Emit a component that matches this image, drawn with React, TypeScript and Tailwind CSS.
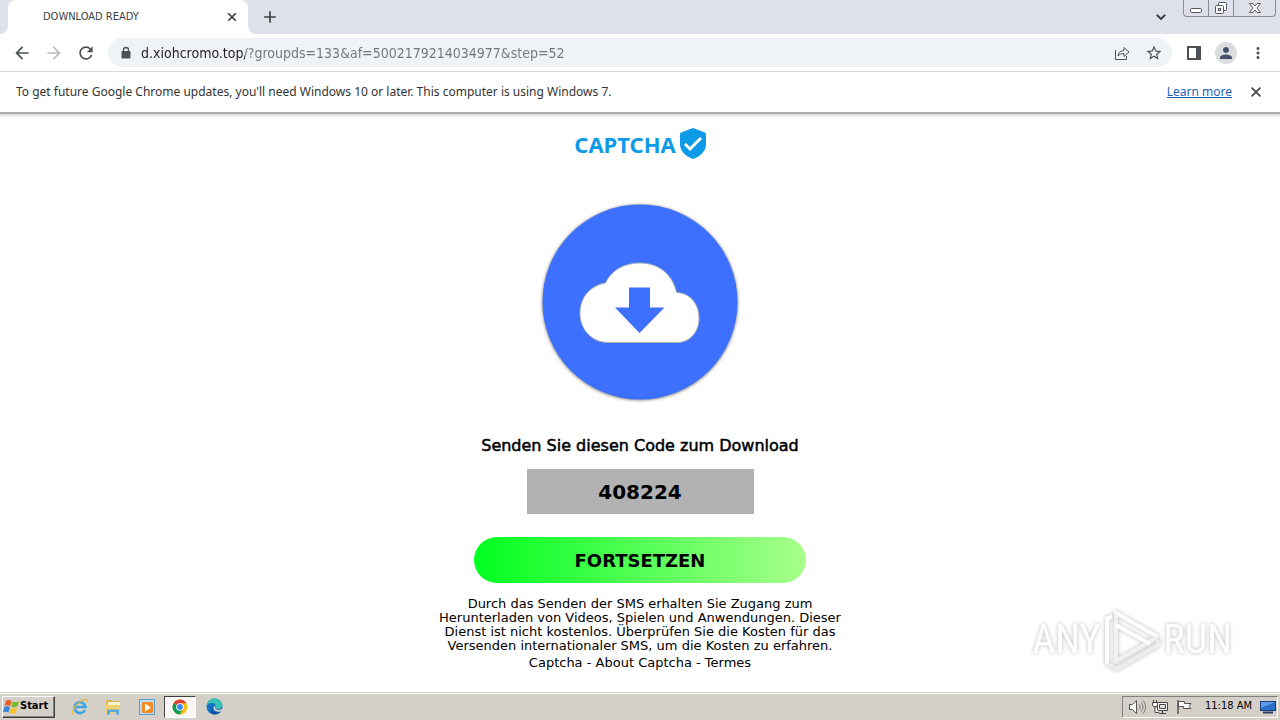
import type { ReactNode } from 'react';
import {
  MdAdd,
  MdArrowBack,
  MdArrowForward,
  MdClose,
  MdKeyboardArrowDown,
  MdMoreVert,
  MdPerson,
  MdRefresh,
  MdStarBorder,
} from 'react-icons/md';

// thickens the drawn path of a Material icon, the first path is its empty bounding box
const bold = '[&_path:last-child]:[stroke-width:1]';

function IconButton({ label, className = '', children }: { label: string; className?: string; children: ReactNode }) {
  return (
    <button type="button" aria-label={label} className={`flex shrink-0 items-center justify-center ${className}`}>
      {children}
    </button>
  );
}

function TabStrip() {
  return (
    <div className="flex h-[34px] bg-[#dee1e9]">
      <div className="w-2 bg-white">
        <div className="h-full rounded-br-lg bg-[#dee1e9]" />
      </div>
      <div className="flex w-60 items-center justify-between rounded-t-lg bg-white pr-2 pl-[35px] text-[#3c4043]">
        <span className="text-[11px]">DOWNLOAD READY</span>
        <IconButton label="Close tab" className="h-4 w-4">
          <MdClose size={14} className={bold} />
        </IconButton>
      </div>
      <div className="flex-1 bg-white">
        <div className="flex h-full items-center rounded-bl-lg bg-[#dee1e9] pl-3 text-[#3c4043]">
          <IconButton label="New tab" className="h-5 w-5">
            <MdAdd size={20} />
          </IconButton>
          <IconButton label="Search tabs" className="mr-3 ml-auto h-5 w-5">
            <MdKeyboardArrowDown size={18} className={bold} />
          </IconButton>
          <div className="mr-1 flex h-[17px] self-start rounded-b border border-t-0 border-[#8a8d94] text-[#55585f]">
            <IconButton label="Minimize" className="w-[25px] border-r border-[#8a8d94]">
              <svg width="14" height="14" viewBox="0 0 14 14" fill="#fff" stroke="currentColor">
                <rect x="1.5" y="7.5" width="11" height="4" rx="1" />
              </svg>
            </IconButton>
            <IconButton label="Restore" className="w-[25px] border-r border-[#8a8d94]">
              <svg width="14" height="14" viewBox="0 0 14 14" fill="#fff" stroke="currentColor">
                <rect x="4.5" y="1.5" width="8" height="8" rx="1" />
                <rect x="1.5" y="4.5" width="8" height="8" rx="1" />
                <rect x="4.5" y="7.5" width="2" height="2" />
              </svg>
            </IconButton>
            <IconButton label="Close" className="w-[41px]">
              <svg width="14" height="14" viewBox="0 0 14 14" fill="#fff" stroke="currentColor">
                <path d="M1.5 2.5H5L7 5l2-2.5h3.5L9 7l3.500 4.500H9L7 9l-2 2.500H1.500L5 7z" />
              </svg>
            </IconButton>
          </div>
        </div>
      </div>
    </div>
  );
}

function Toolbar() {
  return (
    <div className="flex h-[38px] items-center border-b border-[#d5d7da] bg-white px-3 text-[#4d5156]">
      <IconButton label="Back" className="mr-3 h-5 w-5">
        <MdArrowBack size={20} />
      </IconButton>
      <IconButton label="Forward" className="mr-3 h-5 w-5 text-[#babcbe]">
        <MdArrowForward size={20} />
      </IconButton>
      <IconButton label="Reload" className="mr-3 h-5 w-5">
        <MdRefresh size={20} />
      </IconButton>
      <div className="flex h-[29px] flex-1 items-center rounded-full bg-[#f0f3f5] pr-2 pl-[11px]">
        <svg width="14" height="14" viewBox="0 0 14 14" className="mr-2 shrink-0" aria-hidden="true">
          <rect x="2.500" y="5" width="9" height="7.500" rx="1" fill="currentColor" />
          <path d="M4.500 5.500V4a2.500 2.500 0 0 1 5 0v1.500" fill="none" stroke="currentColor" strokeWidth="1.300" />
        </svg>
        <input
          type="text"
          aria-label="Address"
          defaultValue="d.xiohcromo.top/?groupds=133&af=5002179214034977&step=52"
          className="w-full flex-1 bg-[linear-gradient(90deg,#202124_104px,#70757a_104px)] bg-clip-text text-sm text-transparent outline-none"
        />
        <IconButton label="Share" className="mr-3 h-5 w-5">
          <svg width="16" height="16" viewBox="0 0 16 16" fill="none" stroke="currentColor">
            <path d="M1.500 5v9.500h11V11" />
            <path d="M4 11c.5-3.500 2.500-5.500 6-5.500V2.500L15 7l-5 4.500V8.500c-2.500 0-4.500.8-6 2.500z" strokeLinejoin="round" />
          </svg>
        </IconButton>
        <IconButton label="Bookmark this page" className="h-5 w-5">
          <MdStarBorder size={18} />
        </IconButton>
      </div>
      <IconButton label="Side panel" className="ml-3 h-5 w-5">
        <svg width="14" height="14" viewBox="0 0 14 14" fill="currentColor">
          <path d="M0 0h14v14H0zM2 2v10h7V2z" fillRule="evenodd" />
        </svg>
      </IconButton>
      <IconButton label="Profile" className="mx-[11px] h-[22px] w-[22px] rounded-full bg-[#dadce0] text-[#46506b]">
        <MdPerson size={18} />
      </IconButton>
      <IconButton label="Menu" className="h-5 w-5">
        <MdMoreVert size={18} />
      </IconButton>
    </div>
  );
}

function InfoBar() {
  return (
    <div className="flex h-10 items-center bg-white px-4 font-['Noto_Sans',sans-serif] text-xs text-[#333]">
      <p className="flex-1">
        To get future Google Chrome updates, you'll need Windows 10 or later. This computer is using Windows 7.
      </p>
      <a href="#" className="mr-4 text-[#1a62b8] underline">
        Learn more
      </a>
      <IconButton label="Dismiss" className="h-4 w-4 text-[#4d5156]">
        <MdClose size={16} className={bold} />
      </IconButton>
    </div>
  );
}

function DownloadBadge() {
  return (
    <svg width="208" height="208" viewBox="0 0 208 208" role="img" aria-label="Download">
      <defs>
        <filter id="soft" x="-10%" y="-10%" width="120%" height="120%">
          <feGaussianBlur stdDeviation="1.6" />
        </filter>
      </defs>
      <circle cx="104" cy="104.500" r="98" fill="#8c8c84" filter="url(#soft)" />
      <circle cx="104" cy="104" r="97.500" fill="#3d70ff" />
      <path
        d="M72 144.500c-16 0-28-13-28-29 0-17 11-28 25.500-30.500C75 73 87 65 104 65c19 0 33 12 36.500 29.500C154 95 163 106 163 120c0 14-9 24.500-22 24.500z"
        fill="#fff"
        stroke="#a9b3b0"
        strokeWidth="1"
      />
      <path d="M93 89.500h21v20h14.500L103.500 135 79 109.500h14z" fill="#3d70ff" />
    </svg>
  );
}

function Captcha() {
  return (
    <main className="flex flex-1 flex-col items-center border-t-2 border-[#adadad] bg-[linear-gradient(#d8d8d8,#fff_4px)] px-4 pt-[14px] font-['DejaVu_Sans',sans-serif] text-black">
      <div className="flex h-8 items-center gap-1 font-['Noto_Sans',sans-serif] text-[22px] font-bold text-[#0d9ae6]">
        <span>CAPTCHA</span>
        <svg width="26" height="32" viewBox="0 0 26 32" aria-hidden="true">
          <path d="M13 0 25 4.500Q26 5 26 6v10c0 7-5 12-13 15C5 28 0 23 0 16V6Q0 5 1 4.500z" fill="#0d9ae6" />
          <path d="m5 16 5 5L21 10" fill="none" stroke="#fff" strokeWidth="3" />
        </svg>
      </div>
      <div className="mt-[38px]">
        <DownloadBadge />
      </div>
      <h1 className="mt-[30px] text-base leading-5 [-webkit-text-stroke:0.5px_#000]">
        Senden Sie diesen Code zum Download
      </h1>
      <div className="mt-[13px] flex h-[45px] w-[227px] items-center justify-center bg-[#b2b2b2] pt-px text-xl font-bold">
        408224
      </div>
      <button
        type="button"
        className="mt-[23px] h-[46px] w-[332px] rounded-full bg-[linear-gradient(90deg,#00ff20,#a8ff8c)] pt-px text-lg font-bold"
      >
        FORTSETZEN
      </button>
      <p className="mt-[14px] w-[410px] text-center text-[13px] leading-[14px]">
        Durch das Senden der SMS erhalten Sie Zugang zum Herunterladen von Videos, Spielen und Anwendungen. Dieser
        Dienst ist nicht kostenlos. Überprüfen Sie die Kosten für das Versenden internationaler SMS, um die Kosten zu
        erfahren.
      </p>
      <nav className="mt-[2px] text-[13px] leading-4">
        <a href="#">Captcha</a> - <a href="#">About Captcha</a> - <a href="#">Termes</a>
      </nav>
    </main>
  );
}

function Watermark() {
  return (
    <div className="absolute right-12 bottom-5 flex items-center gap-1 font-['Noto_Sans_ExtraCondensed','Roboto_Condensed','Liberation_Sans_Narrow',sans-serif] text-[40px] leading-none text-white [filter:drop-shadow(0_0_2px_#bbb)]">
      <span>ANY</span>
      <svg width="55" height="64" viewBox="2 0 55 64" fill="none" stroke="#fff" strokeWidth="4" aria-hidden="true">
        <path d="M4 56V11l5-3" />
        <path d="M13 50V5l42 24" />
        <path d="M13 5v48l42-24" stroke="#f1f1f1" />
        <path d="M4 56l10 5 41-24v-5" stroke="#ececec" />
        <path d="M13 17l34 19" />
      </svg>
      <span>RUN</span>
    </div>
  );
}

function ChromeLogo() {
  return (
    <svg width="16" height="16" viewBox="0 0 16 16">
      <circle cx="8" cy="8" r="7.500" fill="#f4c20d" />
      <path d="M8 8 1.500 4.200A7.500 7.500 0 0 1 14.500 4.300H8z" fill="#db4437" />
      <path d="M8 8 1.500 4.200A7.500 7.500 0 0 0 7.700 15.500L11 10z" fill="#0f9d58" />
      <circle cx="8" cy="8" r="3.800" fill="#fff" />
      <circle cx="8" cy="8" r="2.900" fill="#4285f4" />
    </svg>
  );
}

function Taskbar() {
  return (
    <footer className="flex h-7 items-center border-t border-[#d4d0c8] bg-[#d4d0c8] px-[2px] shadow-[inset_0_1px_0_#fff]">
      <button
        type="button"
        className="flex h-[22px] w-[53px] items-center border border-t-white border-r-[#404040] border-b-[#404040] border-l-white text-[11px] font-bold text-black shadow-[inset_-1px_-1px_0_#808080]"
      >
        <svg width="17" height="16" viewBox="0 0 17 16" aria-hidden="true">
          <path d="M3 2c2-1.500 4-1 5.500 0L7.200 7.200C5.500 6.200 3.500 6 1.500 7z" fill="#ee5a24" />
          <path d="M9.500 2.500c2 1 4 1 6.500 0L14.500 7.500c-2 1-4 1-6.200.2z" fill="#78b82a" />
          <path d="M1.300 8c2-1 4-.8 5.600.2L5.500 13.500C4 12.500 2 12.300 0 13.300z" fill="#3a86d8" />
          <path d="M8 8.700c2 1 4 1 6.200 0L12.800 14c-2 1-4 1-6.200-.2z" fill="#fbc02d" />
        </svg>
        Start
      </button>
      <div className="ml-3 flex items-center">
        <IconButton label="Internet Explorer" className="w-[25px]">
          <svg width="18" height="18" viewBox="0 0 18 18" fill="none">
            <path d="M14 12a5.500 5.500 0 1 1 .5-3H5" stroke="#38a5e4" strokeWidth="2.600" />
            <path d="M2.500 16.500C-1 14 5 5.500 11 2.500c4-2 6-1.500 5 2" stroke="#e9b93b" strokeWidth="1.300" />
          </svg>
        </IconButton>
        <IconButton label="File Explorer" className="ml-2 w-[26px]">
          <svg width="18" height="18" viewBox="0 0 18 18">
            <path d="M2 2h5l1 1h7v11H2z" fill="#d9b452" />
            <path d="M4 4h12v5H4z" fill="#f8f3cf" />
            <path d="M1 7h15v8H1z" fill="#f0d06c" />
            <path d="M3 16.500v-5h12v5h-3v-2.500H6v2.500z" fill="#5aa9d8" />
          </svg>
        </IconButton>
        <IconButton label="Media Player" className="ml-2 w-[26px]">
          <svg width="18" height="18" viewBox="0 0 18 18">
            <rect x="1.500" y="1.500" width="15" height="15" fill="#b9dcf2" stroke="#5e9fcb" />
            <rect x="4" y="4" width="11" height="11" rx="1.500" fill="#f58a1f" />
            <path d="m7 5.500 6 4-6 4z" fill="#fff" />
          </svg>
        </IconButton>
        <IconButton
          label="Google Chrome"
          className="ml-1 h-[22px] w-8 border border-t-[#404040] border-r-white border-b-white border-l-[#404040] bg-[#f8f7f5]"
        >
          <ChromeLogo />
        </IconButton>
        <IconButton label="Microsoft Edge" className="ml-1 w-7">
          <svg width="17" height="17" viewBox="0 0 17 17">
            <circle cx="8.500" cy="8.500" r="8" fill="#1272c4" />
            <path d="M.5 8C1 3.500 4.500.5 8.500.5c4.500 0 8 3 8 6.500 0 2.500-2 4-4.500 4-1.500 0-2.500-.5-2-1.500C10.500 7 8.500 5 5.500 5 3 5 1 6.500.5 8z" fill="#36c2b4" />
            <path d="M6.500 8c-1.500 3 .5 6.500 4.500 6.500 2 0 3.500-.8 4.500-2-2 3-4.500 4-7 4C5 16.500 3.500 11 6.500 8z" fill="#0c4f9e" />
            <path d="M9 8c1.500 1-1 2.500 1.500 3.500 2 .8 4 .3 5-.5l.7 1.500c-3 2.500-8.700 1-8.700-2C7.500 9 8 8.300 9 8z" fill="#d4d0c8" />
          </svg>
        </IconButton>
      </div>
      <div className="ml-auto flex h-[22px] items-center border border-t-[#808080] border-r-white border-b-white border-l-[#808080] pr-px pl-[5px] text-[11px] text-black">
        <svg width="18" height="16" viewBox="0 0 18 16" fill="#fff" stroke="#555" aria-label="Volume" role="img">
          <path d="M1.500 5.500h3l4-4v13l-4-4h-3z" />
          <path d="M11 5.500c1.500 1.500 1.500 3.500 0 5M13 3.500c2.500 2.500 2.500 6.500 0 9M15 1.500c3.500 3.500 3.500 9.500 0 13" fill="none" stroke="#777" />
        </svg>
        <svg className="ml-[6px]" width="17" height="16" viewBox="0 0 17 16" fill="#fff" stroke="#444" aria-label="Network" role="img">
          <path d="M5.500 3.500h10v8h-10zM7 14.500h7M10.500 12v2" />
          <path d="M7.500 5.500h6v4h-6z" fill="#ddd" />
          <path d="M.5 3.500h5v3L4 7.500H2L.5 6.500zM1.500 1v2M4.500 1v2M3 8v5.500h4" />
        </svg>
        <svg className="ml-[7px]" width="17" height="16" viewBox="0 0 17 16" fill="#fff" stroke="#555" aria-label="Action Center" role="img">
          <path d="M2 1v14" strokeWidth="1.500" />
          <path d="M2.500 2.500h6v2h6.500l-2 3 2 2H7.500v-2h-5z" />
        </svg>
        <span className="ml-3">11:18 AM</span>
        <svg className="ml-2" width="16" height="16" viewBox="0 0 16 16" aria-hidden="true">
          <rect x=".5" y="2.500" width="15" height="9" fill="#2c6fc9" stroke="#173f78" />
          <path d="M1 3h14L1 9z" fill="#5d9be6" />
          <path d="M3 13.500h10" stroke="#2a3f60" strokeWidth="2" />
        </svg>
      </div>
    </footer>
  );
}

export default function App() {
  return (
    <div className="flex min-h-screen flex-col bg-white font-['DejaVu_Sans_Condensed','DejaVu_Sans',sans-serif]">
      <header>
        <TabStrip />
        <Toolbar />
        <InfoBar />
      </header>
      <div className="relative flex flex-1 flex-col">
        <Captcha />
        <Watermark />
      </div>
      <Taskbar />
    </div>
  );
}
